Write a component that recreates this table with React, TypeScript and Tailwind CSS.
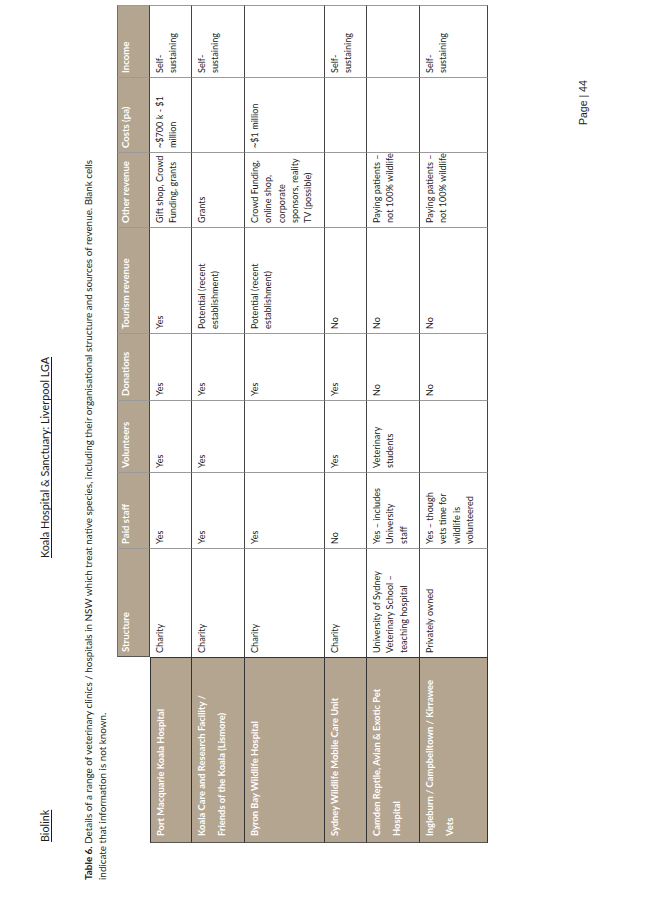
import React from 'react';

type Row = { name: string[]; h: number; cells: string[][] };

const cols = [186, 109, 76, 72, 67, 106, 75, 75, 72];
const heads = ['Structure', 'Paid staff', 'Volunteers', 'Donations', 'Tourism revenue', 'Other revenue', 'Costs (pa)', 'Income'];

const rows: Row[] = [
  {
    name: ['Port Macquarie Koala Hospital'],
    h: 42,
    cells: [['Charity'], ['Yes'], ['Yes'], ['Yes'], ['Yes'], ['Gift shop, Crowd', 'Funding, grants'], ['~$700 k - $1', 'million'], ['Self-', 'sustaining']],
  },
  {
    name: ['Koala Care and Research Facility /', 'Friends of the Koala (Lismore)'],
    h: 53,
    cells: [['Charity'], ['Yes'], ['Yes'], ['Yes'], ['Potential (recent', 'establishment)'], ['Grants'], [], ['Self-', 'sustaining']],
  },
  {
    name: ['Byron Bay Wildlife Hospital'],
    h: 80,
    cells: [['Charity'], ['Yes'], [], ['Yes'], ['Potential (recent', 'establishment)'], ['Crowd Funding,', 'online shop,', 'corporate', 'sponsors, reality', 'TV (possible)'], ['~$1 million'], []],
  },
  {
    name: ['Sydney Wildlife Mobile Care Unit'],
    h: 42,
    cells: [['Charity'], ['No'], ['Yes'], ['Yes'], ['No'], [], [], ['Self-', 'sustaining']],
  },
  {
    name: ['Camden Reptile, Avian & Exotic Pet', 'Hospital'],
    h: 53,
    cells: [['University of Sydney', 'Veterinary School –', 'teaching hospital'], ['Yes – includes', 'University', 'staff'], ['Veterinary', 'students'], ['No'], ['No'], ['Paying patients –', 'not 100% wildlife'], [], []],
  },
  {
    name: ['Ingleburn / Campbelltown / Kirrawee', 'Vets'],
    h: 68,
    cells: [['Privately owned'], ['Yes – though', 'vets time for', 'wildlife is', 'volunteered'], [], ['No'], ['No'], ['Paying patients –', 'not 100% wildlife'], [], ['Self-', 'sustaining']],
  },
];

function Lines({ lines }: { lines: string[] }) {
  return (
    <>
      {lines.map((l, i) => (
        <div key={i} className="whitespace-nowrap">{l}</div>
      ))}
    </>
  );
}

export default function App() {
  return (
    <div className="w-[653px] h-[923px] overflow-hidden bg-white">
      <div className="w-[923px] h-[653px] origin-top-left translate-y-[923px] -rotate-90 bg-white flex flex-col text-[#1b1b1b] font-['Lato',sans-serif]">
        {/* running header */}
        <div className="pt-[38px] pl-[81px] flex text-[10.8px] leading-[14px]">
          <span className="underline underline-offset-2 w-[284px]">Biolink</span>
          <span className="underline underline-offset-2">Koala Hospital &amp; Sanctuary: Liverpool LGA</span>
        </div>

        {/* caption */}
        <div className="mt-[29px] pl-[43px] text-[9.9px] leading-[14px]">
          <div className="whitespace-nowrap">
            <span className="font-bold">Table 6.</span> Details of a range of veterinary clinics / hospitals in NSW which treat native species, including their organisational structure and sources of revenue. Blank cells
          </div>
          <div className="whitespace-nowrap">indicate that information is not known.</div>
        </div>

        {/* table */}
        <table className="mt-[8px] ml-[80px] w-[838px] table-fixed border-separate border-spacing-0 text-[9.1px] leading-[13.3px]">
          <colgroup>
            {cols.map((w, i) => (
              <col key={i} style={{ width: w }} />
            ))}
          </colgroup>
          <thead>
            <tr className="h-[33px]">
              <th className="p-0"></th>
              {heads.map((h, i) => (
                <th
                  key={h}
                  className={`bg-[#b4a591] text-white font-bold text-[9.6px] text-left align-top px-[4px] pt-[1px] border-t border-b border-r border-t-[#6f6f6f] border-b-[#444] border-r-[#9a9a9a] ${i === 0 ? 'border-l border-l-[#555]' : ''}`}
                >
                  {h}
                </th>
              ))}
            </tr>
          </thead>
          <tbody>
            {rows.map((r, ri) => (
              <tr key={ri} style={{ height: r.h }}>
                <td className={`bg-[#b4a591] text-white font-bold text-[9.4px] align-top px-[6px] pt-[0px] leading-[20px] border-l border-b border-r border-l-[#555] border-b-[#333] border-r-[#333] ${ri === 0 ? 'border-t border-t-[#333]' : ''}`}>
                  <Lines lines={r.name} />
                </td>
                {r.cells.map((c, ci) => (
                  <td key={ci} className="align-top pl-[4px] pr-[2px] pt-[3px] border-b border-r border-b-[#444] border-r-[#9a9a9a]">
                    <Lines lines={c} />
                  </td>
                ))}
              </tr>
            ))}
          </tbody>
        </table>

        {/* page number */}
        <div className="mt-[88px] ml-[798px] text-[10.5px] leading-[14px] font-['Liberation_Sans',sans-serif] text-[#222] whitespace-nowrap">
          Page | 44
        </div>
      </div>
    </div>
  );
}
